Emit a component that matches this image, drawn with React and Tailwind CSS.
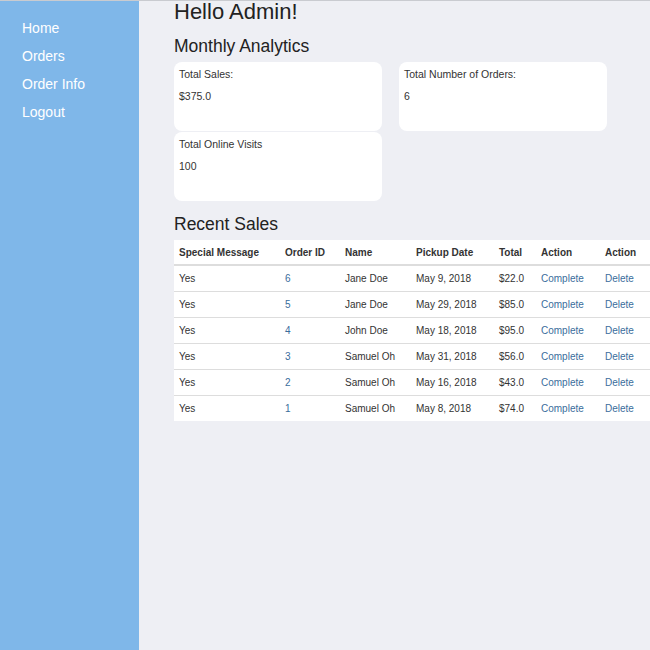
import React from "react";

const rows = [
  ["Yes", "6", "Jane Doe", "May 9, 2018", "$22.0"],
  ["Yes", "5", "Jane Doe", "May 29, 2018", "$85.0"],
  ["Yes", "4", "John Doe", "May 18, 2018", "$95.0"],
  ["Yes", "3", "Samuel Oh", "May 31, 2018", "$56.0"],
  ["Yes", "2", "Samuel Oh", "May 16, 2018", "$43.0"],
  ["Yes", "1", "Samuel Oh", "May 8, 2018", "$74.0"],
];

function Card({ title, value }) {
  return (
    <div className="w-[208px] h-[69px] bg-white rounded-[8px] px-[5px] pt-[5px] text-[10.5px] text-[#333]">
      <div className="leading-[14px]">{title}</div>
      <div className="leading-[14px] mt-[8px]">{value}</div>
    </div>
  );
}

export default function App() {
  return (
    <div
      className="w-[650px] h-[650px] flex border-t border-[#c9cbd0] overflow-hidden bg-[#eeeff4]"
      style={{ fontFamily: '"Liberation Sans", Arial, sans-serif' }}
    >
      <div className="w-[139px] shrink-0 bg-[#7fb7e9] pt-[13px] pl-[22px] flex flex-col">
        {["Home", "Orders", "Order Info", "Logout"].map((t) => (
          <a key={t} className="text-white text-[14px] leading-[28px]">{t}</a>
        ))}
      </div>
      <div className="flex-1 pl-[35px] text-[#222]">
        <h1 className="text-[22px] leading-[22px]">Hello Admin!</h1>
        <h2 className="text-[17.5px] leading-[20px] mt-[13px]">Monthly Analytics</h2>
        <div className="mt-[6px] flex flex-col gap-[1px]">
          <div className="flex gap-[17px]">
            <Card title="Total Sales:" value="$375.0" />
            <Card title="Total Number of Orders:" value="6" />
          </div>
          <Card title="Total Online Visits" value="100" />
        </div>
        <h2 className="text-[17.5px] leading-[20px] mt-[13px]">Recent Sales</h2>
        <table className="mt-[6px] bg-white text-[10px] text-[#333] border-collapse w-[500px]">
          <thead>
            <tr className="h-[25px] border-b-2 border-[#dddddd] text-left">
              <th className="w-[106px] pl-[5px] font-bold">Special Message</th>
              <th className="w-[60px] pl-[5px] font-bold">Order ID</th>
              <th className="w-[71px] pl-[5px] font-bold">Name</th>
              <th className="w-[83px] pl-[5px] font-bold">Pickup Date</th>
              <th className="w-[42px] pl-[5px] font-bold">Total</th>
              <th className="w-[64px] pl-[5px] font-bold">Action</th>
              <th className="pl-[5px] font-bold">Action</th>
            </tr>
          </thead>
          <tbody>
            {rows.map((r, i) => (
              <tr key={i} className={"h-[26px] " + (i < rows.length - 1 ? "border-b border-[#dddddd]" : "")}>
                <td className="pl-[5px]">{r[0]}</td>
                <td className="pl-[5px] text-[#3a6d9c]">{r[1]}</td>
                <td className="pl-[5px]">{r[2]}</td>
                <td className="pl-[5px]">{r[3]}</td>
                <td className="pl-[5px]">{r[4]}</td>
                <td className="pl-[5px] text-[#3a6d9c]">Complete</td>
                <td className="pl-[5px] text-[#3a6d9c]">Delete</td>
              </tr>
            ))}
          </tbody>
        </table>
      </div>
    </div>
  );
}
